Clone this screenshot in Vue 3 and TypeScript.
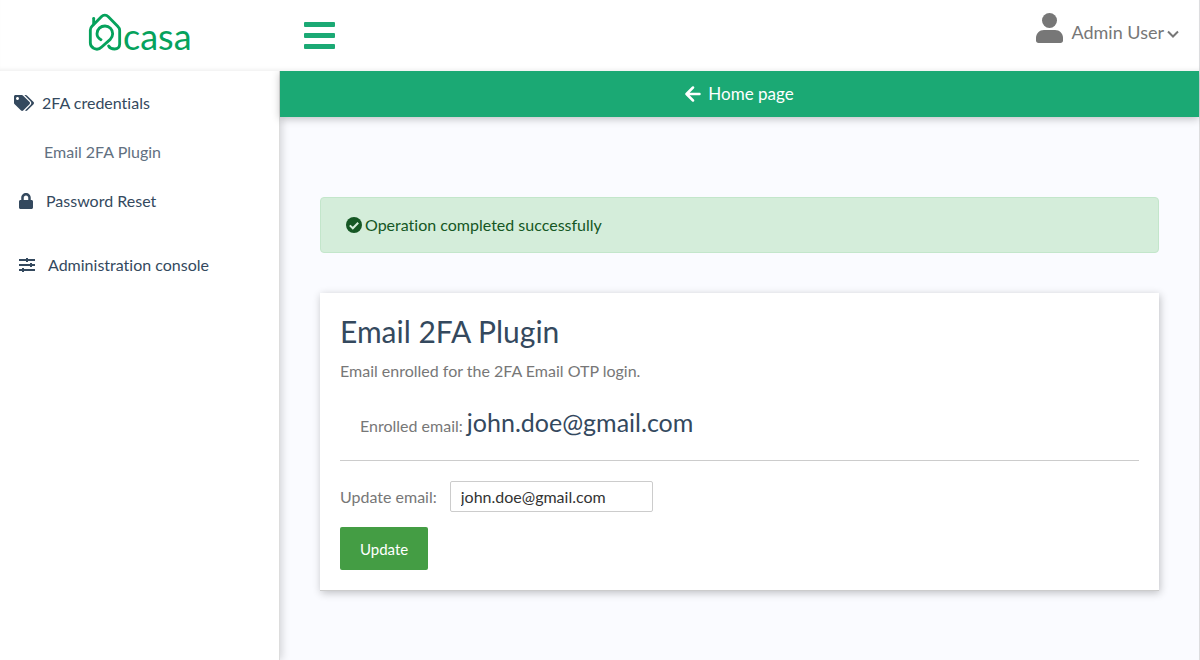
<script setup lang="ts">
import { ref } from 'vue'

const email = ref('john.doe@gmail.com')
const enrolled = ref('john.doe@gmail.com')
const saved = ref(true)
const menuOpen = ref(true)

function update() {
  enrolled.value = email.value
  saved.value = true
}
</script>

<template>
  <div class="page">
    <header class="topbar">
      <a class="logo" href="#" aria-label="casa">
        <svg class="logo-mark" viewBox="54 39 102 114" aria-hidden="true">
          <g fill="none" stroke="#06a25c" stroke-width="8.5" stroke-linecap="round" stroke-linejoin="round">
            <path d="M93 119C84 114 81 108 81 101C81 87 92 78 105 78C118 78 128 88 128 101C128 109 125 114 120 119L95 141C88 148 79 149 71 145C64 141 61 136 61 129V90C61 86 63 82 66 79L94 50C100 44 109 44 115 50L143 79C147 83 149 86 149 91V132C149 141 143 147 134 147C126 147 119 144 116 138" />
            <path d="M71 72V55" />
          </g>
        </svg>
        <span class="logo-text">casa</span>
      </a>
      <button class="burger" type="button" aria-label="Toggle menu" :aria-expanded="menuOpen" @click="menuOpen = !menuOpen">
        <span></span><span></span><span></span>
      </button>
      <button class="user" type="button">
        <svg class="user-icon" viewBox="0 0 27 30" aria-hidden="true">
          <circle cx="13.5" cy="7.5" r="7.5" />
          <path d="M8 17H19C23.500 17 27 20.500 27 25V27.500C27 29 26 30 24.500 30H2.500C1 30 0 29 0 27.500V25C0 20.500 3.500 17 8 17Z" />
        </svg>
        <span>Admin User</span>
        <svg class="chevron" viewBox="0 0 12 8" aria-hidden="true">
          <path d="M1 1.500L6 6.500L11 1.500" />
        </svg>
      </button>
    </header>

    <div class="body">
      <nav v-show="menuOpen" class="sidebar">
        <a class="item tags-item" href="#">
          <svg class="tags" viewBox="0 0 640 512" aria-hidden="true">
            <path d="M497.941 225.941L286.059 14.059A48 48 0 0 0 252.118 0H48C21.490 0 0 21.490 0 48v204.118a48 48 0 0 0 14.059 33.941l211.882 211.882c18.744 18.745 49.136 18.746 67.882 0l204.118-204.118c18.745-18.745 18.745-49.137 0-67.882zM112 160c-26.510 0-48-21.490-48-48s21.490-48 48-48 48 21.490 48 48-21.490 48-48 48zm513.941 133.823L421.823 497.941c-18.745 18.745-49.137 18.745-67.882 0l-.36-.36L527.640 323.522c16.999-16.999 26.360-39.600 26.360-63.640s-9.362-46.641-26.360-63.640L331.397 0h48.721a48 48 0 0 1 33.941 14.059l211.882 211.882c18.745 18.745 18.745 49.137 0 67.882z" />
          </svg>
          <span>2FA credentials</span>
        </a>
        <a class="item sub" href="#">Email 2FA Plugin</a>
        <a class="item lock-item" href="#">
          <svg class="lock" viewBox="0 0 448 512" aria-hidden="true">
            <path d="M400 224h-24v-72C376 68.200 307.800 0 224 0S72 68.200 72 152v72H48c-26.500 0-48 21.500-48 48v192c0 26.500 21.500 48 48 48h352c26.500 0 48-21.500 48-48V272c0-26.500-21.500-48-48-48zm-104 0H152v-72c0-39.700 32.300-72 72-72s72 32.300 72 72v72z" />
          </svg>
          <span>Password Reset</span>
        </a>
        <a class="item admin-item" href="#">
          <svg class="sliders" viewBox="0 0 16 14" aria-hidden="true">
            <path d="M0 1H16V3H0ZM0 6H16V8H0ZM0 11H16V13H0ZM7 0H9V4H7ZM11 5H13V9H11ZM3 10H5V14H3Z" />
          </svg>
          <span>Administration console</span>
        </a>
      </nav>

      <main class="main">
        <a class="home" href="#">
          <svg class="arrow" viewBox="0 0 16 16" aria-hidden="true">
            <path d="M8 1.500L1.500 8L8 14.500M2 8H14.500" />
          </svg>
          <span>Home page</span>
        </a>

        <div class="content">
          <div v-if="saved" class="alert" role="status">
            <svg class="check" viewBox="0 0 16 16" aria-hidden="true">
              <circle cx="8" cy="8" r="8" />
              <path d="M3.800 8.400L6.800 11.300L12.200 5.700" />
            </svg>
            <span>Operation completed successfully</span>
          </div>

          <section class="card">
            <h1>Email 2FA Plugin</h1>
            <p class="lead">Email enrolled for the 2FA Email OTP login.</p>
            <p class="enrolled">Enrolled email: <span>{{ enrolled }}</span></p>
            <form @submit.prevent="update">
              <div class="field">
                <label for="email">Update email:</label>
                <input id="email" v-model="email" type="text" />
              </div>
              <button class="update" type="submit">Update</button>
            </form>
          </section>
        </div>
      </main>
    </div>
  </div>
</template>

<style>
body {
  margin: 0;
  background: #fafbff;
}
</style>

<style scoped>
.page {
  box-sizing: border-box;
  min-height: 100vh;
  display: flex;
  flex-direction: column;
  border-right: 1px solid #dddddf;
  background: #fafbff;
  color: #777;
  font-family: Lato, "Liberation Sans", sans-serif;
  font-size: 16px;
  line-height: 24px;
  font-variant-ligatures: none;
}

a {
  text-decoration: none;
  color: inherit;
}

button {
  border: 0;
  margin: 0;
  padding: 0;
  background: none;
  font: inherit;
  font-variant-ligatures: none;
  color: inherit;
  cursor: pointer;
}

.topbar {
  position: relative;
  z-index: 2;
  display: flex;
  align-items: flex-start;
  height: 71px;
  background: #fff;
  box-shadow: inset 0 -4px 4px -3px rgba(0, 0, 0, 0.08);
}

.logo {
  display: flex;
  box-sizing: border-box;
  width: 280px;
  padding: 13px 0 0 88px;
  color: #06a25c;
}

.logo-mark {
  width: 34px;
  height: 38px;
}

.logo-text {
  margin-left: 1px;
  font-size: 36px;
  line-height: 46px;
}

.burger {
  display: flex;
  flex-direction: column;
  gap: 6px;
  width: 31px;
  margin: 22px 0 0 24px;
}

.burger span {
  height: 5px;
  border-radius: 1px;
  background: #1ba974;
}

.user {
  display: flex;
  align-items: center;
  margin: 11px 20px 0 auto;
  font-size: 18px;
}

.user-icon {
  width: 27px;
  height: 30px;
  margin-right: 8px;
  fill: #777;
}

.user span {
  padding-top: 9px;
}

.chevron {
  width: 12px;
  height: 8px;
  margin: 12px 0 0 3px;
  fill: none;
  stroke: #777;
  stroke-width: 2;
}

.body {
  flex: 1;
  display: flex;
}

.sidebar {
  position: relative;
  z-index: 1;
  flex: none;
  display: flex;
  flex-direction: column;
  gap: 25px;
  box-sizing: border-box;
  width: 280px;
  padding-top: 20px;
  border-right: 1px solid #ddd;
  background: #fff;
  box-shadow: 2px 0 8px rgba(0, 0, 0, 0.16);
  color: #34495e;
}

.item {
  display: flex;
  align-items: center;
}

.item svg {
  fill: #34495e;
}

.tags-item {
  padding-left: 14px;
}

.tags {
  width: 20px;
  height: 16px;
  margin-right: 8px;
}

.sub {
  padding-left: 44px;
  color: #627081;
}

.lock-item {
  padding-left: 19px;
}

.lock {
  width: 14px;
  height: 16px;
  margin-right: 13px;
}

.admin-item {
  margin-top: 15px;
  padding-left: 19px;
}

.sliders {
  width: 16px;
  height: 14px;
  margin-right: 13px;
}

.main {
  position: relative;
  z-index: 1;
  flex: 1;
  min-width: 0;
}

.home {
  display: flex;
  align-items: center;
  justify-content: center;
  gap: 7px;
  height: 46px;
  background: #1ba974;
  box-shadow: 0 2px 8px rgba(0, 0, 0, 0.24);
  color: #fff;
  font-size: 17px;
}

.arrow {
  width: 16px;
  height: 16px;
  fill: none;
  stroke: #fff;
  stroke-width: 2.5;
  stroke-linecap: round;
  stroke-linejoin: round;
}

.content {
  padding: 80px 40px 40px;
}

.alert {
  display: flex;
  align-items: center;
  gap: 3px;
  padding: 15px 25px;
  border: 1px solid #c3e6cb;
  border-radius: 4px;
  background: #d4edda;
  color: #155724;
}

.check {
  width: 16px;
  height: 16px;
  fill: #155724;
}

.check path {
  fill: none;
  stroke: #d4edda;
  stroke-width: 2;
}

.card {
  margin-top: 40px;
  padding: 20px;
  border-bottom: 1px solid #ccc;
  background: #fff;
  box-shadow: 1px 2px 8px rgba(0, 0, 0, 0.24);
}

h1 {
  margin: 0;
  color: #34495e;
  font-size: 30px;
  font-weight: 400;
  line-height: 36px;
}

.lead {
  margin: 10px 0 0;
}

.enrolled {
  margin: 20px 0 0;
  padding: 0 20px 15px;
  border-bottom: 1px solid #ccc;
  line-height: 38px;
}

.enrolled span {
  color: #34495e;
  font-size: 25px;
}

.field {
  display: flex;
  align-items: center;
  gap: 13px;
  margin: 20px 0 15px;
}

.field input {
  box-sizing: border-box;
  width: 203px;
  height: 31px;
  padding: 0 10px;
  border: 1px solid #ccc;
  border-radius: 2px;
  background: #fff;
  color: #333;
  font: inherit;
}

.update {
  display: block;
  height: 43px;
  padding: 0 20px;
  border-radius: 2px;
  background: #449d44;
  color: #fff;
  font-size: 15px;
}
</style>
